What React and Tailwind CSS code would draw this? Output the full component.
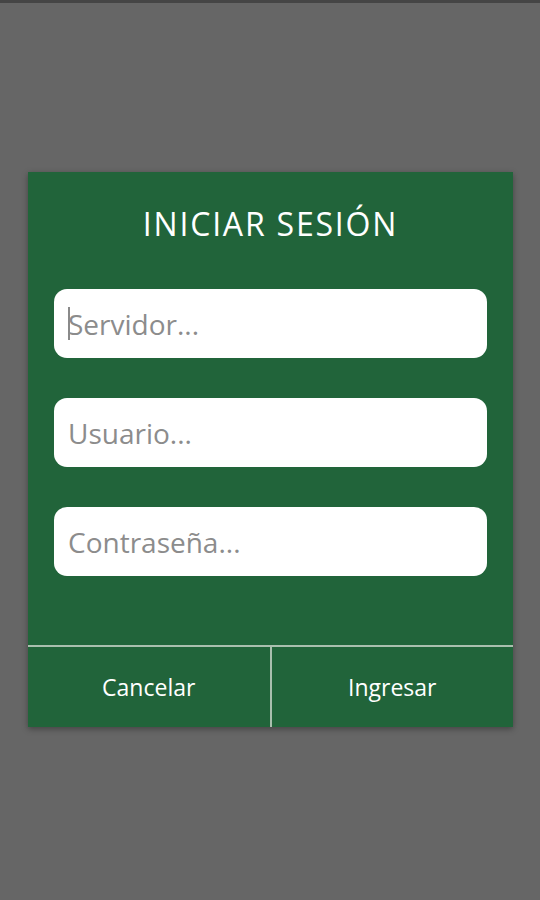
export default function App() {
  const font = { fontFamily: '"Open Sans", "Noto Sans", sans-serif' };
  return (
    <div className="w-[540px] h-[900px] bg-[#666666] border-t-[3px] border-[#454545]" style={font}>
      <div className="pt-[169px] pl-[28px]">
        <div className="w-[485px] bg-[#21643a] flex flex-col shadow-[0_2px_6px_rgba(0,0,0,0.35)]">
          <div className="pt-[32px] h-[72px] flex justify-center">
            <div className="text-white text-[32px] leading-[40px] tracking-[1.8px] font-medium">INICIAR SESIÓN</div>
          </div>
          <div className="pt-[45px] px-[26px] pb-[69px] flex flex-col gap-[40px]">
            <div className="h-[69px] bg-white rounded-[13px] flex items-center pl-[14px]">
              <div className="w-[2px] h-[33px] bg-[#8a8a8a] mr-[-2px]"></div>
              <span className="text-[28px] text-[#8c8c8c] leading-none">Servidor...</span>
            </div>
            <div className="h-[69px] bg-white rounded-[13px] flex items-center pl-[14px]">
              <span className="text-[28px] text-[#8c8c8c] leading-none">Usuario...</span>
            </div>
            <div className="h-[69px] bg-white rounded-[13px] flex items-center pl-[14px]">
              <span className="text-[28px] text-[#8c8c8c] leading-none">Contraseña...</span>
            </div>
          </div>
          <div className="border-t-[2px] border-[#a9bfae] flex h-[82px]">
            <div className="flex-1 flex items-center justify-center text-white text-[23px] font-medium">Cancelar</div>
            <div className="w-[2px] bg-[#a9bfae]"></div>
            <div className="flex-1 flex items-center justify-center text-white text-[23px] font-medium">Ingresar</div>
          </div>
        </div>
      </div>
    </div>
  );
}
